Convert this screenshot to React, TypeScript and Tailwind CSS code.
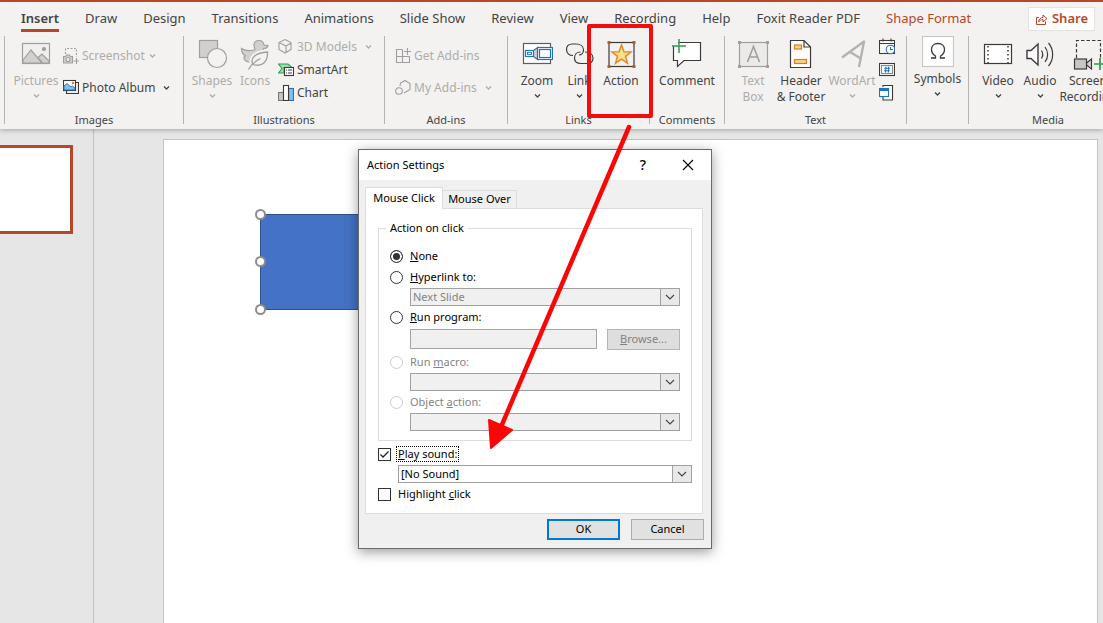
import { ReactNode } from "react"
import clsx from "clsx"

const tabs = ["Insert", "Draw", "Design", "Transitions", "Animations", "Slide Show", "Review", "View", "Recording", "Help", "Foxit Reader PDF", "Shape Format"]

const App: React.FC = () => {
    return <div className="relative flex h-screen flex-col overflow-hidden bg-[#e6e6e6] font-['Noto_Sans','Open_Sans',sans-serif] text-xs text-[#444]">
        {/* Ribbon */}
        <header className="relative z-10 h-[129px] shrink-0 overflow-hidden border-t-2 border-[#b7472a] bg-[#f3f2f1] shadow-[0_1px_5px_rgba(0,0,0,0.3)]">
            <div className="flex h-[34px] items-center justify-between pl-[21px] pr-2">
                <nav className="flex gap-[26px] text-[13px] whitespace-nowrap">
                    {tabs.map((tab) => (
                        <button
                            key={tab}
                            className={clsx(
                                "h-[26px] border-b-3 pt-0.5",
                                tab === "Insert" ? "border-[#b7472a] font-semibold" : "border-transparent",
                                tab === "Shape Format" && "text-[#b7472a]"
                            )}
                        >
                            {tab}
                        </button>
                    ))}
                </nav>
                <button className="flex h-6 shrink-0 items-center gap-1 border border-[#e5e3e1] bg-white px-1.5 text-[13px] font-semibold text-[#b7472a]">
                    <ShareIcon />
                    Share
                </button>
            </div>
            <div className="ml-1 flex h-[88px] border-l border-[#b5b3b1]">
                <Group label="Images" className="w-[178px] pl-1">
                    <LargeButton label="Pictures" icon={<PicturesIcon />} className="w-[54px]" chevron disabled />
                    <div className="flex flex-col gap-[15px] pt-[9px]">
                        <SmallButton label="Screenshot" icon={<ScreenshotIcon />} chevron disabled />
                        <SmallButton label="Photo Album" icon={<PhotoAlbumIcon />} chevron wide />
                    </div>
                </Group>
                <Group label="Illustrations" className="w-[200px] pl-2">
                    <LargeButton label="Shapes" icon={<ShapesIcon />} className="w-10" chevron disabled />
                    <LargeButton label="Icons" icon={<DuckIcon />} className="w-[46px]" disabled />
                    <div className="flex flex-col gap-1.5">
                        <SmallButton label="3D Models" icon={<CubeIcon />} chevron wide disabled />
                        <SmallButton label="SmartArt" icon={<SmartArtIcon />} />
                        <SmallButton label="Chart" icon={<ChartIcon />} />
                    </div>
                </Group>
                <Group label="Add-ins" className="w-[122px] pl-2.5">
                    <div className="flex flex-col gap-[15px] pt-[9px]">
                        <SmallButton label="Get Add-ins" icon={<GetAddinsIcon />} disabled />
                        <SmallButton label="My Add-ins" icon={<MyAddinsIcon />} chevron wide disabled />
                    </div>
                </Group>
                <Group label="Links" className="w-[141px] pl-2">
                    <LargeButton label="Zoom" icon={<ZoomIcon />} className="w-[42px]" chevron />
                    <LargeButton label="Link" icon={<LinkIcon />} className="w-[42px]" chevron />
                    <LargeButton label="Action" icon={<ActionIcon />} className="w-[42px]" />
                </Group>
                <Group label="Comments" className="w-[74px] justify-center">
                    <LargeButton label="Comment" icon={<CommentIcon />} className="w-[54px]" />
                </Group>
                <Group label="Text" className="w-[181px] pl-1">
                    <LargeButton label="Text Box" icon={<TextBoxIcon />} className="w-12" disabled />
                    <LargeButton label="Header & Footer" icon={<HeaderIcon />} className="w-12" />
                    <LargeButton label="WordArt" icon={<WordArtIcon />} className="w-[54px]" chevron disabled />
                    <div className="flex flex-col gap-1.5">
                        <button aria-label="Date & Time"><DateIcon /></button>
                        <button aria-label="Slide Number"><NumberIcon /></button>
                        <button aria-label="Object"><ObjectIcon /></button>
                    </div>
                </Group>
                <Group label="" className="w-[61px] justify-center">
                    <LargeButton label="Symbols" icon={<OmegaIcon />} className="w-[54px]" chevron />
                </Group>
                <Group label="Media" className="w-[158px] pl-2">
                    <LargeButton label="Video" icon={<VideoIcon />} className="w-[42px]" chevron />
                    <LargeButton label="Audio" icon={<AudioIcon />} className="w-[42px]" chevron />
                    <LargeButton label="Screen Recording" icon={<RecordingIcon />} className="w-[54px]" />
                </Group>
            </div>
        </header>

        {/* Workspace */}
        <main className="flex flex-1">
            <aside className="w-[94px] shrink-0 border-r border-[#c3c3c3] pt-4">
                <div className="mr-5 h-[89px] border-3 border-l-0 border-[#b7472a] bg-white"></div>
            </aside>
            <section className="flex flex-1 pt-2.5 pr-[5px] pl-[69px]">
                {/* Slide */}
                <div className="relative flex-1 border border-b-0 border-[#c3c3c3] bg-white">
                    <div className="absolute top-[74px] left-24 h-24 w-64 border border-[#2f528f] bg-[#4472c4]">
                        <Handle className="-top-1.5" />
                        <Handle className="top-[41px]" />
                        <Handle className="-bottom-1.5" />
                    </div>
                </div>
            </section>
        </main>

        <ActionSettings />

        {/* Markup over the window */}
        <div className="absolute top-6 left-[587px] z-30 h-[94px] w-[66px] rounded-xs border-4 border-[#f20c0c]"></div>
        <svg className="absolute top-[120px] left-[480px] z-30" width="160" height="336" fill="#fa0606">
            <path d="M149 7 L18 314" stroke="#fa0606" strokeWidth="4.5" strokeLinecap="round" />
            <path d="M9 300 L32 310 L11 328 Z" stroke="#fa0606" strokeWidth="2" strokeLinejoin="round" />
        </svg>
    </div>
}

/* Ribbon parts */

type GroupProps = {
    label: string
    className?: string
    children: ReactNode
}

const Group: React.FC<GroupProps> = ({ label, className, children }) => {
    return (
        <div className={clsx("flex shrink-0 flex-col border-r border-[#b5b3b1]", label && "pt-0.5")}>
            <div className={clsx("flex flex-1 items-start", className)}>{children}</div>
            {label && <span className="h-2 text-center text-[11px] leading-2">{label}</span>}
        </div>
    )
}

type ButtonProps = {
    label: string
    icon: ReactNode
    className?: string
    chevron?: boolean
    wide?: boolean
    disabled?: boolean
}

const LargeButton: React.FC<ButtonProps> = ({ label, icon, className, chevron, disabled }) => {
    // Labels with a second word wrap on two lines
    const cut = label.indexOf(" ")
    const lines = cut < 0 ? [label] : [label.slice(0, cut), label.slice(cut + 1)]
    return (
        <button className={clsx("flex shrink-0 flex-col items-center leading-4 whitespace-nowrap", className, disabled && "text-[#aeacaa]")} disabled={disabled}>
            {icon}
            <span className="mt-[3px] flex w-0 flex-col items-center">
                {lines.map((line) => <span key={line}>{line}</span>)}
            </span>
            {chevron && <Chevron className="mt-1" />}
        </button>
    )
}

const SmallButton: React.FC<ButtonProps> = ({ label, icon, chevron, wide, disabled }) => {
    return (
        <button className={clsx("flex h-[17px] items-center whitespace-nowrap", disabled && "text-[#aeacaa]")} disabled={disabled}>
            {icon}
            <span className="ml-[3px]">{label}</span>
            {chevron && <Chevron className={wide ? "ml-2" : "ml-1"} />}
        </button>
    )
}

const Chevron: React.FC<{ className?: string }> = ({ className }) => (
    <svg className={clsx("shrink-0", className)} width="7" height="6" fill="none" stroke="currentColor" strokeWidth="1.3">
        <path d="M1 1.5 L3.5 4 L6 1.5" />
    </svg>
)

const Handle: React.FC<{ className: string }> = ({ className }) => (
    <span className={clsx("absolute -left-1.5 size-[11px] rounded-full border-2 border-[#8c8c8c] bg-white", className)}></span>
)

/* Dialog */

const ActionSettings: React.FC = () => {
    return <div role="dialog" aria-label="Action Settings" className="absolute top-[149px] left-[358px] z-20 w-[354px] border border-[#6b6b6b] bg-[#f0f0f0] pb-2 text-[11px] text-black shadow-[0_3px_12px_rgba(0,0,0,0.4)]">
        <div className="flex h-[30px] items-center bg-white pr-[17px] pl-2">
            <h1 className="flex-1">Action Settings</h1>
            <button className="mr-9 text-sm font-medium" aria-label="Help">?</button>
            <button aria-label="Close">
                <svg width="12" height="12" stroke="black" strokeWidth="1.1"><path d="M1 1 L11 11 M11 1 L1 11" /></svg>
            </button>
        </div>
        <div className="px-1.5 pt-[7px]">
            {/* Tabs */}
            <div className="flex items-end">
                <button className="relative z-10 -mb-px h-[22px] w-[78px] border border-b-0 border-[#dcdcdc] bg-white">Mouse Click</button>
                <button className="h-[18px] w-[74px] border border-b-0 border-l-0 border-[#dcdcdc]">Mouse Over</button>
            </div>
            <div className="mr-0.5 border border-[#dcdcdc] bg-white pt-[11px] pr-2.5 pb-2 pl-3">
                <fieldset className="mb-0.5 border border-[#dcdcdc] px-[11px] pb-[9px]">
                    <legend className="-ml-1 px-1 leading-4">Action on click</legend>
                    <div className="flex flex-col gap-px pt-2.5">
                        <Radio id="none" checked><u>N</u>one</Radio>
                        <Radio id="hyperlink"><u>H</u>yperlink to:</Radio>
                        <Select value="Next Slide" labelledBy="hyperlink-label" className="ml-5" disabled />
                        <Radio id="program"><u>R</u>un program:</Radio>
                        <div className="ml-5 flex h-[23px] gap-2.5 pt-px">
                            <input aria-labelledby="program-label" className="h-5 min-w-0 flex-1 border border-[#a5a5a5] bg-[#f0f0f0] px-1" disabled />
                            <button className="h-[21px] w-[73px] border border-[#b5b5b5] bg-[#dedede] text-[#838383]" disabled><u>B</u>rowse...</button>
                        </div>
                        <Radio id="macro" disabled>Run <u>m</u>acro:</Radio>
                        <Select value="" labelledBy="macro-label" className="ml-5" disabled />
                        <Radio id="object" disabled>Object <u>a</u>ction:</Radio>
                        <Select value="" labelledBy="object-label" className="ml-5" disabled />
                    </div>
                </fieldset>
                <Check id="sound" checked><u>P</u>lay sound:</Check>
                <Select value="[No Sound]" labelledBy="sound-label" className="ml-5" />
                <Check id="highlight">Highlight <u>c</u>lick</Check>
            </div>
            <div className="flex justify-end gap-[11px] pt-[5px] pr-px">
                <button className="h-[21px] w-[73px] border-2 border-[#0078d7] bg-[#e1e1e1]">OK</button>
                <button className="h-[21px] w-[73px] border border-[#adadad] bg-[#e1e1e1]">Cancel</button>
            </div>
        </div>
    </div>
}

type ChoiceProps = {
    id: string
    checked?: boolean
    disabled?: boolean
    children: ReactNode
}

const Radio: React.FC<ChoiceProps> = ({ id, checked, disabled, children }) => {
    return (
        <div className={clsx("flex h-5 items-center gap-[7px]", disabled && "text-[#838383]")}>
            <input
                type="radio"
                name="action"
                id={id}
                defaultChecked={checked}
                disabled={disabled}
                className="size-[13px] appearance-none rounded-full border border-[#333] bg-white checked:bg-[#333] checked:shadow-[inset_0_0_0_2px_white] disabled:border-[#ccc]"
            />
            <label id={`${id}-label`} htmlFor={id}>{children}</label>
        </div>
    )
}

const Check: React.FC<ChoiceProps> = ({ id, checked, children }) => {
    return (
        <div className="flex h-[22px] items-center gap-[5px]">
            <span className="relative flex">
                <input type="checkbox" id={id} defaultChecked={checked} className="size-[13px] appearance-none border border-[#333] bg-white" />
                {checked && (
                    <svg className="pointer-events-none absolute inset-0" width="13" height="13" fill="none" stroke="#222" strokeWidth="1.3">
                        <path d="M2.5 6.5 L5 9 L10.5 3.5" />
                    </svg>
                )}
            </span>
            <label id={`${id}-label`} htmlFor={id} className={clsx("border border-dotted px-px leading-[14px]", checked ? "border-black" : "border-transparent")}>{children}</label>
        </div>
    )
}

type SelectProps = {
    value: string
    labelledBy: string
    className?: string
    disabled?: boolean
}

const Select: React.FC<SelectProps> = ({ value, labelledBy, className, disabled }) => {
    return (
        <div className={clsx("relative h-[18px]", className)}>
            <select
                aria-labelledby={labelledBy}
                disabled={disabled}
                className="block h-full w-full appearance-none border border-[#a0a0a0] bg-white px-0.5 leading-4 opacity-100 disabled:bg-[#f0f0f0] disabled:text-[#838383]"
            >
                <option>{value}</option>
            </select>
            <span className="pointer-events-none absolute top-0 right-0 flex h-full w-5 items-center justify-center border border-[#a0a0a0] bg-[#e8e8e8]">
                <svg width="10" height="6" fill="none" stroke="#444" strokeWidth="1.1"><path d="M1 1 L5 5 L9 1" /></svg>
            </span>
        </div>
    )
}

/* Icons, large ones are 32px and small ones 16px */

const Large: React.FC<{ children: ReactNode }> = ({ children }) => (
    <svg className="shrink-0" width="32" height="32" fill="none" stroke="#3b3a39" strokeWidth="1.2">{children}</svg>
)

const Small: React.FC<{ children: ReactNode }> = ({ children }) => (
    <svg className="shrink-0" width="16" height="17" fill="none" stroke="#3b3a39" strokeWidth="1.1">{children}</svg>
)

const ShareIcon = () => (
    <svg width="13" height="13" fill="none" stroke="#b7472a" strokeWidth="1">
        <path d="M4 4.5 H1.5 V11.5 H10.5 V8.5" />
        <path d="M3.5 9 C4 6 5.5 4.5 8 4.5 V2 L12 5.5 L8 9 V6.5 C6 6.5 4.5 7.5 3.5 9 Z" />
    </svg>
)

const PicturesIcon = () => (
    <Large>
        <g stroke="#a19f9d">
            <rect x="2.5" y="5.5" width="27" height="20" fill="#f0efee" />
            <path d="M3 22 L11 12 L22 25 H3 Z M18 19.5 L22 16 L29 23 V25 H22.5 Z" fill="#d2d0ce" />
            <circle cx="24" cy="11" r="1.5" fill="#a19f9d" />
        </g>
    </Large>
)

const ScreenshotIcon = () => (
    <Small>
        <g stroke="#a19f9d">
            <path d="M2.5 7 V1.5 H13.5 V10" strokeDasharray="2 1.5" />
            <path d="M13.5 11 V17 M10.5 14 H16" />
            <path d="M0.5 9.5 H2.5 L3.5 8 H6.5 L7.5 9.5 H9.5 V16 H0.5 Z" fill="#d2d0ce" />
            <circle cx="5" cy="12.5" r="2" fill="#f3f2f1" />
        </g>
    </Small>
)

const PhotoAlbumIcon = () => (
    <Small>
        <path d="M13 3.5 H15.5 V14.5 H3.5 V12" />
        <rect x="0.5" y="1.5" width="12" height="10" fill="white" />
        <path d="M1 7 L4 4.5 L8 8 L9.5 7 L12 9 V11 H1 Z" fill="#83beec" stroke="#1e73bd" strokeWidth="0.9" />
        <circle cx="10" cy="4" r="0.7" fill="#e07b2c" stroke="#e07b2c" />
    </Small>
)

const ShapesIcon = () => (
    <Large>
        <g stroke="#a19f9d">
            <rect x="3.5" y="2.5" width="18" height="17" fill="#d2d0ce" />
            <circle cx="21" cy="20" r="9.5" fill="#f3f2f1" />
        </g>
    </Large>
)

const DuckIcon = () => (
    <Large>
        <path d="M2.5 10.5 C6 13 11 13 15 12 C17 11.5 15 9.5 15 7 C15 4 17 2.5 20 2.5 C23 2.5 24.5 4.5 25 7 L29 7.5 C28.5 9.5 27 10.5 24.5 10.5 C24 12 25 14 25 17 C24 24 17 25 10 24 C7 23.5 5 22 5 19.5 C5 18.5 6 18 7 18 C4 17 2.5 14 2.5 10.5 Z" fill="#d2d0ce" stroke="#a19f9d" />
        <path d="M29 13 C30 24 24 31 13 27 C9 20 16 13 29 13 Z" fill="#f3f2f1" stroke="#f3f2f1" strokeWidth="3" />
        <path d="M28.5 14 C29 23 24 29.5 14 26.500 C10.500 20 17 14.500 28.5 14 Z M9.500 31.5 C12 27 16.500 23 21.5 20.5" fill="#f3f2f1" stroke="#a19f9d" strokeWidth="1.3" />
    </Large>
)

const CubeIcon = () => (
    <Small>
        <path d="M7 1.5 L13 4.5 V11.5 L7 15 L1 11.5 V4.5 Z M4 6 L8 8 L13 5 M8 8 V14.5 M1 4.5 L4 6" stroke="#a19f9d" />
    </Small>
)

const SmartArtIcon = () => (
    <Small>
        <path d="M0.5 3 H10 L14 6.5 H6 V12 H0.5 L4 7.5 Z" fill="#a1dbb0" stroke="#2f9c51" />
        <rect x="6.5" y="6.5" width="9" height="8" fill="white" />
        <path d="M8 9 H9 M10 9 H14 M8 12 H9 M10 12 H14" />
    </Small>
)

const ChartIcon = () => (
    <Small>
        <rect x="0.5" y="8.5" width="5" height="8" fill="#c8c6c4" stroke="#7a7876" />
        <rect x="10.5" y="4.5" width="5" height="12" fill="#83beec" stroke="#1e73bd" />
        <rect x="5.5" y="1.5" width="5" height="15" fill="white" />
    </Small>
)

const GetAddinsIcon = () => (
    <Small>
        <path d="M7.5 2.5 H1.5 V15.5 H14.5 V9.5 H1.5 M7.5 2.5 V15.5 M12.5 1 V8 M9 4.5 H16" stroke="#a19f9d" />
    </Small>
)

const MyAddinsIcon = () => (
    <Small>
        <g stroke="#a19f9d">
            <path d="M5 7 L5.5 4 L10 1.5 L15 4.5 V10.5 L9 14" />
            <circle cx="4" cy="12" r="3.3" />
        </g>
    </Small>
)

const ZoomIcon = () => (
    <Large>
        <rect x="2.5" y="5.5" width="27" height="20" fill="white" stroke="#605e5c" />
        <path d="M13 12 L17 9.5 V21.5 L13 19" fill="#d2d0ce" stroke="#605e5c" />
        <rect x="4.5" y="12.5" width="8" height="6" fill="white" stroke="#1e73bd" />
        <rect x="6.5" y="14.5" width="4" height="2" stroke="#1e73bd" strokeWidth="0.9" />
        <rect x="16.5" y="9.5" width="15" height="12" fill="white" stroke="#1e73bd" />
        <rect x="18.5" y="11.5" width="11" height="8" fill="white" stroke="#1e73bd" />
    </Large>
)

const LinkIcon = () => (
    <Large>
        <path d="M10 17.5 C6 17.5 3.5 15 3.5 11.5 C3.5 8 6 6 9.5 6 H13 C17.5 6 20.5 8.5 20.5 12 C20.5 15 18.5 17 16 17" />
        <path d="M22 14 C27 14 30 16.5 30 20 C30 23.5 27.5 25.5 24 25.5 H18 C14 25.5 11.5 23.5 11.5 20 C11.5 16.5 14 14 17.5 14" />
    </Large>
)

const ActionIcon = () => (
    <Large>
        <rect x="4" y="4.5" width="25" height="24" />
        <path d="M16.5 7 L19 13.7 L26 14 L20.5 18.3 L22.5 25.2 L16.5 21.2 L10.5 25.2 L12.5 18.3 L7 14 L14 13.7 Z" fill="#fde08a" stroke="#e58a2a" strokeWidth="1.5" />
        <g fill="#c55a11" stroke="none">
            <rect x="2.5" y="3" width="3" height="3" />
            <rect x="27.5" y="3" width="3" height="3" />
            <rect x="2.5" y="27" width="3" height="3" />
            <rect x="27.5" y="27" width="3" height="3" />
        </g>
    </Large>
)

const CommentIcon = () => (
    <Large>
        <path d="M2.5 4.5 H29.5 V22.5 H13 L6.5 28.5 V22.5 H2.5 Z" fill="white" />
        <path d="M0 0 H7 V8 H0 Z" fill="#f3f2f1" stroke="none" />
        <path d="M8 1 V15 M1 8 H15" stroke="#2f9c51" strokeWidth="1.5" />
    </Large>
)

const TextBoxIcon = () => (
    <Large>
        <g stroke="#a19f9d">
            <rect x="2.5" y="4.5" width="28" height="24" fill="#eceae8" />
            <path d="M10.5 24 L16.5 8.5 L22.5 24 M12.5 19 H20.5" strokeWidth="1.6" />
            <path d="M1 4.5 H4 M29 4.5 H32 M1 28.5 H4 M29 28.5 H32" strokeWidth="3" />
        </g>
    </Large>
)

const HeaderIcon = () => (
    <Large>
        <path d="M5.5 2.5 H19 L25.5 9 V29.5 H5.5 Z" fill="white" />
        <path d="M19 2.5 V9 H25.5" />
        <rect x="9.5" y="7" width="7" height="4" fill="#fbd08b" stroke="#e07b1c" />
        <rect x="9.5" y="21.5" width="12" height="4" fill="#fbd08b" stroke="#e07b1c" />
    </Large>
)

const WordArtIcon = () => (
    <Large>
        <path d="M6 19.5 L28 3.5 L23 29 M14 14 L24 20" stroke="#b5b3b1" strokeWidth="2.4" strokeLinejoin="round" />
    </Large>
)

const DateIcon = () => (
    <Small>
        <rect x="0.5" y="2.5" width="15" height="13" fill="white" />
        <path d="M0.5 5.5 H15.5 M4 0.5 V3.5 M12 0.5 V3.5" />
        <circle cx="11.5" cy="11.5" r="4.3" fill="white" stroke="#1e73bd" />
        <path d="M11.5 9 V11.5 H14" stroke="#1e73bd" />
    </Small>
)

const NumberIcon = () => (
    <Small>
        <rect x="0.5" y="2.5" width="15" height="12" fill="white" />
        <rect x="2.5" y="4.5" width="11" height="8" stroke="#8a8886" />
        <path d="M7 5.5 L6.5 11.5 M9.8 5.5 L9.3 11.5 M5.2 7.3 H11 M5 9.7 H10.8" stroke="#1e73bd" />
    </Small>
)

const ObjectIcon = () => (
    <Small>
        <path d="M4 3 V1.5 H13.5 V16 H4 V13" fill="white" />
        <rect x="0.5" y="4.5" width="9" height="8" fill="white" stroke="#1e73bd" />
        <path d="M0.5 6 H9.5" stroke="#1e73bd" strokeWidth="2" />
    </Small>
)

const OmegaIcon = () => (
    <Large>
        <rect x="0.5" y="0.5" width="31" height="30" fill="white" stroke="#c8c6c4" />
        <path d="M9 22 H13.5 V20 C11 18.5 9.5 16.5 9.5 13.5 C9.5 10 12 7.5 16 7.5 C20 7.5 22.5 10 22.5 13.5 C22.5 16.5 21 18.5 18.5 20 V22 H23" strokeWidth="1.3" />
    </Large>
)

const VideoIcon = () => (
    <Large>
        <rect x="2.5" y="6.5" width="27" height="19" fill="white" />
        <path d="M6 8 V25 M26 8 V25" strokeWidth="1.5" strokeDasharray="1.500 2.500" />
    </Large>
)

const AudioIcon = () => (
    <Large>
        <path d="M3 12.5 H7 L14 6 V27 L7 20.5 H3 Z" fill="white" strokeWidth="1.4" />
        <path d="M17.5 12.5 C19 15 19 18 17.5 20.5 M21 9 C24.5 13.5 24.5 19.5 21 24 M24.5 5 C30 11.5 30 21.5 24.5 28" />
    </Large>
)

const RecordingIcon = () => (
    <Large>
        <path d="M4.5 20 V2.5 H28.5 V20" strokeDasharray="3.5 2" />
        <path d="M14.5 25 L19.5 21 V31 L14.5 27 Z" fill="#d2d0ce" />
        <rect x="2.5" y="21" width="12" height="10" fill="#c8c6c4" />
        <path d="M22 26 H32 M28 20 V32" stroke="#2f9c51" strokeWidth="1.7" />
    </Large>
)

export default App
